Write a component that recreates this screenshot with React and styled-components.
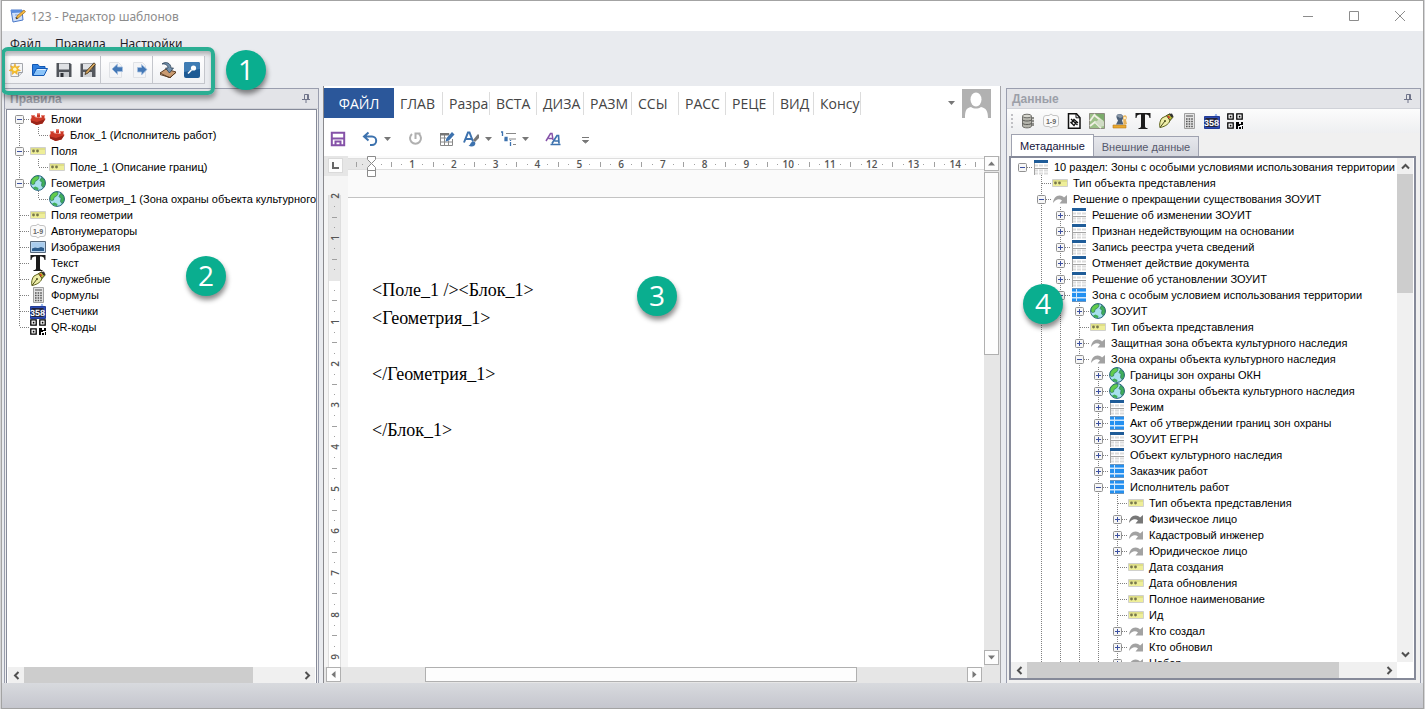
import React from 'react';
import styled, { createGlobalStyle, css } from 'styled-components';

const GlobalStyle = createGlobalStyle`
  * {
    box-sizing: border-box;
  }
  body {
    margin: 0;
    background: #d4d4d6;
    font-family: 'Liberation Sans', Arial, sans-serif;
    font-size: 11px;
    color: #000;
  }
  button {
    margin: 0;
    padding: 0;
    border: 0;
    background: none;
    font: inherit;
    color: inherit;
    cursor: pointer;
  }
  svg {
    display: block;
    flex: none;
  }
`;

const uiFont = "'Open Sans', 'Segoe UI', sans-serif";
const menuFont = "'Noto Sans', 'Segoe UI', sans-serif";

const dots = (direction) =>
  `repeating-linear-gradient(${direction}, #808080 0 1px, transparent 1px 2px)`;

/* ---------- window ---------- */

const Window = styled.div`
  position: relative;
  display: flex;
  flex-direction: column;
  height: 100vh;
  margin: 0 1px;
  border: 1px solid #a3a3a3;
  background: #e9ebef;
  overflow: hidden;
`;

const TitleBar = styled.header`
  display: flex;
  flex: none;
  align-items: center;
  height: 30px;
  padding-left: 8px;
  background: #fff;
  color: #8c8c8c;
  font-family: ${menuFont};
  h1 {
    flex: 1;
    margin: 0 0 0 5px;
    font-size: 12px;
    font-weight: 400;
  }
`;

const WindowButton = styled.button`
  display: flex;
  align-items: center;
  justify-content: center;
  width: 46px;
  height: 30px;
`;

const MenuBar = styled.nav`
  display: flex;
  flex: none;
  align-items: center;
  gap: 14px;
  height: 25px;
  padding-left: 8px;
  font-family: ${menuFont};
  font-size: 12px;
  color: #1e1e28;
`;

const MainToolbar = styled.div`
  display: flex;
  flex: none;
  align-self: flex-start;
  height: 28px;
  margin: 0 0 2px 2px;
  border: solid #c4c6cc;
  border-width: 0 1px 1px 0;
  background: linear-gradient(#fff, #f0f1f4);
`;

const ToolGroup = styled.div`
  display: flex;
  align-items: center;
  gap: 8px;
  padding: 0 4px;
  & + & {
    padding-left: 7px;
    border-left: 1px solid #c4c6cc;
  }
`;

const IconButton = styled.button`
  display: flex;
  align-items: center;
  justify-content: center;
  width: 16px;
  height: 16px;
`;

const Workspace = styled.main`
  display: flex;
  flex: 1;
  min-height: 0;
  padding: 0 2px;
`;

const StatusBar = styled.footer`
  flex: none;
  height: 25px;
  background: linear-gradient(#d8dade, #c5c6ce);
`;

/* ---------- callouts ---------- */

const Highlight = styled.div`
  position: absolute;
  z-index: 3;
  top: 46px;
  left: -1px;
  width: 214px;
  height: 48px;
  border: 4px solid #2bae93;
  border-radius: 7px;
  box-shadow: 1px 4px 5px rgba(0, 0, 0, 0.35), inset 1px 3px 4px rgba(0, 0, 0, 0.25);
  pointer-events: none;
`;

const Callout = styled.div`
  position: absolute;
  z-index: 4;
  top: ${(props) => props.$top}px;
  left: ${(props) => props.$left}px;
  width: 40px;
  height: 40px;
  border-radius: 50%;
  background: #0aae8f;
  box-shadow: 1px 4px 5px rgba(0, 0, 0, 0.45);
  color: #fff;
  font-family: ${uiFont};
  font-size: 28px;
  line-height: 38px;
  text-align: center;
`;

/* ---------- dock panels ---------- */

const Panel = styled.section`
  position: relative;
  display: flex;
  flex: none;
  flex-direction: column;
  width: ${(props) => props.$width}px;
  margin-top: 2px;
  border: 1px solid #9a9eae;
  border-bottom: 0;
  background: #f0f0f0;
`;

const PanelHeader = styled.div`
  display: flex;
  flex: none;
  align-items: center;
  justify-content: space-between;
  height: 20px;
  padding: 0 8px 0 5px;
  background: #e3e4e8;
  border-bottom: 1px solid #d0d2d8;
  color: #9c9fa8;
  h2 {
    margin: 0;
    font-size: 12px;
    font-weight: 700;
  }
`;

const DataToolbar = styled.div`
  display: flex;
  flex: none;
  align-items: center;
  gap: 7px;
  height: 24px;
  padding-left: 4px;
  background: linear-gradient(#fcfcfc, #eeeff1);
`;

const Grip = styled.span`
  width: 2px;
  height: 15px;
  background: repeating-linear-gradient(#c0c0c4 0 2px, transparent 2px 4px);
`;

const Tabs = styled.div`
  display: flex;
  flex: none;
  align-items: flex-end;
  height: 23px;
  padding-left: 4px;
`;

const Tab = styled.button`
  height: ${(props) => (props.$active ? 22 : 20)}px;
  padding: 0 8px;
  border: 1px solid #9fa2b0;
  border-bottom: 0;
  background: ${(props) =>
    props.$active ? '#fff' : 'linear-gradient(#e6e7ec, #d5d7de)'};
  color: ${(props) => (props.$active ? '#14143c' : '#55586c')};
  & + & {
    border-left: 0;
  }
`;

/* ---------- tree ---------- */

const TreeBox = styled.div`
  display: flex;
  flex: 1;
  flex-direction: column;
  min-height: 0;
  margin: ${(props) => props.$margin};
  border: ${(props) => props.$border}px solid #868a99;
  ${(props) =>
    !props.$closed &&
    css`
      border-bottom: 0;
    `}
  background: #fff;
`;

const TreeRow = styled.div`
  display: flex;
  flex: 1;
  min-height: 0;
`;

const TreeList = styled.ul`
  flex: 1;
  min-width: 0;
  margin: 0;
  padding: 1px 0 0 ${(props) => props.$pad}px;
  overflow: hidden;
  list-style: none;
`;

const Node = styled.li`
  display: flex;
  align-items: center;
  height: 16px;
  white-space: nowrap;
  svg {
    position: relative;
    z-index: 1;
  }
`;

const Guide = styled.span`
  flex: none;
  width: 19px;
  height: 16px;
  background: ${(props) => (props.$on ? dots('to bottom') : 'none')} 9px 0 / 1px
    100% no-repeat;
`;

const Branch = styled.span`
  display: flex;
  flex: none;
  align-items: center;
  width: 20px;
  height: 16px;
  padding-left: 5px;
  background: ${dots('to right')} 10px 8px / 10px 1px no-repeat
    ${(props) =>
      props.$up ? `, ${dots('to bottom')} 9px 0 / 1px 8px no-repeat` : ''}
    ${(props) =>
      props.$down ? `, ${dots('to bottom')} 9px 8px / 1px 8px no-repeat` : ''};
`;

const Label = styled.span`
  margin-left: 5px;
  line-height: 16px;
`;

/* ---------- scroll bars ---------- */

const ScrollTrack = styled.div`
  display: flex;
  flex: none;
  flex-direction: ${(props) => (props.$vertical ? 'column' : 'row')};
  ${(props) => (props.$vertical ? 'width: 16px' : 'height: 16px')};
  margin: ${(props) => props.$margin || 0};
  background: #f0f0f0;
`;

const ScrollArrow = styled.button`
  display: flex;
  flex: none;
  align-items: center;
  justify-content: center;
  width: 16px;
  height: 16px;
`;

const Thumb = styled.div`
  flex: ${(props) => props.$size};
  background: #cdcdcd;
`;

const Space = styled.div`
  flex: ${(props) => props.$size};
`;

const DocTrack = styled(ScrollTrack)`
  background: #e6e6e6;
  padding: ${(props) => (props.$vertical ? '0 1px 2px 0' : '0 18px 1px 2px')};
`;

const DocArrow = styled(ScrollArrow)`
  width: 15px;
  height: 15px;
  border: 1px solid #b0b0b0;
  background: #fdfdfd;
`;

const DocThumb = styled(Thumb)`
  border: 1px solid #b0b0b0;
  background: #fdfdfd;
`;

/* ---------- document editor ---------- */

const Editor = styled.section`
  position: relative;
  display: flex;
  flex: 1;
  flex-direction: column;
  min-width: 0;
  margin: 0 5px 0 4px;
  padding-top: 2px;
  border-left: 1px solid #8a8a8e;
  border-right: 1px solid #a6a6aa;
  background: #fff;
`;

const Ribbon = styled.div`
  display: flex;
  flex: none;
  align-items: center;
  height: 30px;
  padding-right: 9px;
  font-family: ${uiFont};
  font-size: 14px;
  color: #444;
`;

const FileTab = styled.button`
  width: 70px;
  height: 30px;
  background: #2b579a;
  color: #fff;
`;

const RibbonTab = styled.button`
  width: ${(props) => props.$width}px;
  height: 23px;
  padding-left: 6px;
  border-right: 1px solid #dcdcdc;
  overflow: hidden;
  line-height: 21px;
  text-align: left;
  white-space: nowrap;
`;

const AccountButton = styled.button`
  display: flex;
  align-items: center;
  gap: 7px;
  margin-left: auto;
`;

const QuickBar = styled.div`
  display: flex;
  flex: none;
  align-items: center;
  gap: 16px;
  height: 38px;
  padding: 4px 0 0 6px;
`;

const QuickGroup = styled.div`
  display: flex;
  gap: 8px;
`;

const QuickButton = styled.button`
  display: flex;
  align-items: center;
  gap: 6px;
`;

const Sheet = styled.div`
  display: grid;
  flex: 1;
  grid-template: 20px 1fr / 24px 1fr 16px;
  min-height: 0;
  background: #f5f5f5;
`;

const RulerCorner = styled.div`
  padding: 2px 0 0 4px;
  background: #e6e6e6;
`;

const TabStop = styled.button`
  display: flex;
  align-items: center;
  justify-content: center;
  width: 15px;
  height: 15px;
  border: 1px solid #dadada;
  background: #fdfdfd;
`;

const RulerRow = styled.div`
  position: relative;
  background: #fafafa;
  svg {
    position: absolute;
    top: 0;
    left: 18px;
  }
`;

const HRuler = styled.div`
  display: flex;
  height: 12px;
  margin-top: 2px;
  border: solid #dedede;
  border-width: 1px 0;
  background: #fff;
  font-family: ${uiFont};
  font-size: 10px;
  font-weight: 600;
  color: #555;
`;

const Units = styled.div`
  display: flex;
  flex: 1;
  flex-direction: ${(props) => (props.$vertical ? 'column' : 'row')};
`;

const HMargin = styled.div`
  display: flex;
  width: 23px;
  padding-right: 6px;
  background: #e6e6e6;
`;

const HMarks = styled.div`
  display: flex;
  flex: 1;
  padding: 0 3px 0 5px;
`;

const Mark = styled.span`
  display: flex;
  flex: 1;
  align-items: center;
  justify-content: center;
  min-width: 0;
  min-height: 0;
  ${(props) =>
    props.$edge &&
    css`
      flex: 0 0 10px;
    `}
`;

const Tick = styled.i`
  width: ${(props) => (props.$wide ? 5 : 1)}px;
  height: ${(props) => (props.$tall ? 5 : 1)}px;
  background: #a0a0a0;
`;

const Turned = styled.span`
  line-height: 10px;
  transform: rotate(-90deg);
`;

const VRuler = styled.div`
  display: flex;
  flex-direction: column;
  margin: 19px 7px 0 4px;
  border: solid #dedede;
  border-width: 0 1px;
  background: #fff;
  font-family: ${uiFont};
  font-size: 10px;
  font-weight: 600;
  color: #555;
`;

const VMargin = styled.div`
  display: flex;
  flex: none;
  flex-direction: column;
  justify-content: flex-end;
  height: 86px;
  padding-bottom: 6px;
  background: #e6e6e6;
`;

const VUnit = styled.div`
  display: flex;
  flex: none;
  flex-direction: column;
  height: 42px;
`;

const VMarks = styled.div`
  display: flex;
  flex: 1;
  flex-direction: column;
  padding: 4px 0 5px;
`;

const PageArea = styled.div`
  display: flex;
  min-width: 0;
  padding-top: 21px;
  background: #fafafa;
`;

const Page = styled.div`
  flex: 1;
  padding: 78px 24px 0;
  border-top: 1px solid #c3c3c3;
  background: #fff;
  font-family: 'Liberation Serif', 'Times New Roman', serif;
  font-size: 18px;
  p {
    height: 28px;
    margin: 0;
    line-height: 28px;
  }
`;

const VScrollCell = styled.div`
  display: flex;
  grid-area: 1 / 3 / 3 / 4;
  background: #fff;
`;

/* ---------- icons ---------- */

const shapes = {
  app: (
    <>
      <path d="M1 2h11l1 10-10 2z" fill="#cfe0fa" stroke="#4a78c8" />
      <path d="M1 2h11l.3 2.500L1.500 5z" fill="#5b8ee0" />
      <path d="M5 7h5M5 9.500h4" stroke="#7fa0d8" />
      <path d="M6 11l1-3 7-6 1.500 1.800-7 6z" fill="#f5b940" stroke="#9c6a1c" strokeWidth=".7" />
      <path d="M6 11l.6-1.800 1.400 1.300z" fill="#222" />
    </>
  ),
  newDoc: (
    <>
      <path d="M3 1.500h11.500v9l-4 4H3z" fill="#f4f5f7" stroke="#a4a7ad" />
      <path d="M14.500 10.500h-4v4" fill="#dcdfe3" stroke="#9a9da3" />
      <path d="M7 1.500l1 3.500 3.500-1-2 3 3 1.500-3.500.8.300 3.200-2.600-2-2.700 2 .5-3.300L1 8.500l3-1.700-1.500-3L5.700 5z" fill="#f5c02c" stroke="#e09a18" strokeWidth=".5" />
      <circle cx="6.800" cy="7.200" r="1.800" fill="#fff6c0" />
    </>
  ),
  open: (
    <>
      <path d="M.5 13.500V2.500h5.500l1.500 2H13V7" fill="#2f80e0" stroke="#1258b4" />
      <path d="M.8 13.500L4.500 6.500H15.500L12 13.500z" fill="#8cc4f8" stroke="#1258b4" />
      <path d="M5.200 7.500h8.500" stroke="#dff0ff" />
    </>
  ),
  save: (
    <>
      <path d="M.5 1h13.500l1.500 1.500V15H.5z" fill="#50545a" />
      <path d="M3 1.500h10v6H3z" fill="#dfe1e4" />
      <path d="M3 10h10v5H3z" fill="#c6c9cd" />
      <path d="M4.500 11h3v4h-3z" fill="#2c2f34" />
    </>
  ),
  saveAs: (
    <>
      <path d="M.5 1.500H14L15.500 3v12H.5z" fill="#55585e" />
      <path d="M3 2h9v5.500H3z" fill="#dfe1e4" />
      <path d="M3 10h9v5H3z" fill="#d0d2d5" />
      <path d="M5 12.500l1-3L14 .8l1.500 1.500L8 11z" fill="#d8a860" stroke="#3a2c18" strokeWidth=".8" />
    </>
  ),
  back: (
    <>
      <path d="M1.500.5h9l3 3v12h-12z" fill="#f4f5f7" stroke="#e0e2e6" />
      <path d="M4 7L9.500 2v3h5v4.500h-5v3z" fill="#4478b6" stroke="#a4bfe0" strokeWidth=".8" />
    </>
  ),
  forward: (
    <>
      <path d="M1.500.5h9l3 3v12h-12z" fill="#f4f5f7" stroke="#e0e2e6" />
      <path d="M15 7.500l-5.500-5v3h-4V10h4v3z" fill="#4478b6" stroke="#a4bfe0" strokeWidth=".8" />
    </>
  ),
  insert: (
    <>
      <path d="M0 11l6-4 10 3-6 6z" fill="#c99a70" stroke="#5c3c22" />
      <path d="M0 11v1.500l10 3 6-5V10" fill="none" stroke="#5c3c22" />
      <path d="M2 2c3.500-3 9-1 9 4h2.500L9.500 11 5.500 6H8C8 3 5 1.500 2 2z" fill="#7290ac" stroke="#24384e" strokeWidth=".7" />
    </>
  ),
  search: (
    <>
      <rect width="16" height="16" rx="2" fill="#1d5a94" />
      <path d="M0 2a2 2 0 012-2h12a2 2 0 012 2v5L0 10z" fill="#3f7cb4" />
      <circle cx="9.500" cy="6" r="2.600" fill="#fff" />
      <path d="M7.500 8L4 11.500" stroke="#fff" strokeWidth="1.600" />
    </>
  ),
  block: (
    <>
      <path d="M.5 8l4-2.500 11 2-3 5-6 1.500L1 11z" fill="#cc3a28" />
      <path d="M1 9.500l6 1.500 8.500-3-3 4.500-6 1.500L1 11.500z" fill="#9a2418" />
      <path d="M1.500 4h3v4h-3zM5.500 6h3v3.500h-3zM7 2.500h3V6H7zM11.500 4h3v4h-3z" fill="#cc3a28" />
      <path d="M1.500 4.500h3M7 3h3M11.500 4.500h3M5.500 6.500h3" stroke="#e88070" />
    </>
  ),
  field: (
    <>
      <path d="M.5 4.500h15v7H.5z" fill="#eeee98" stroke="#d0d0cc" />
      <path d="M1 5h14v2H1z" fill="#dede88" />
      <circle cx="3.500" cy="8" r="1.400" fill="#77774c" />
      <circle cx="7.500" cy="8" r="1.400" fill="#77774c" />
    </>
  ),
  globe: (
    <>
      <circle cx="8" cy="8" r="7.400" fill="#a8e0ee" stroke="#24607c" />
      <path d="M1.500 5C3 2 6 .8 8.500 1L9 3 7.500 5 5 6.500 4.500 9 2.500 9.500 1 8z" fill="#62cc4c" stroke="#2a7a5c" strokeWidth=".7" />
      <path d="M11.500 2.500c3 1.500 4 4 3.500 7l-2 3-1.500-2 .5-3-2-2z" fill="#3fae5a" stroke="#2a7a5c" strokeWidth=".7" />
      <path d="M3 12.500l2.500-1 3 1.500-.5 2c-2 .2-4-.7-5-2.500z" fill="#3fae5a" />
    </>
  ),
  auto: (
    <>
      <path d="M3 2.500h3l2-1.500 2 1.500h3q2.500 0 2.500 2.500v6q0 2.500-2.500 2.500h-3L8 15l-2-1.500H3Q.5 13.500.5 11V5Q.5 2.500 3 2.500z" fill="#fafafa" stroke="#c4c4c4" />
      <text x="8" y="10.500" textAnchor="middle" fontSize="7" fontWeight="700" fill="#666" fontFamily="Liberation Sans, sans-serif">1-9</text>
    </>
  ),
  image: (
    <>
      <path d="M.5 2.500h15v11H.5z" fill="#b9d4ee" stroke="#56687c" />
      <path d="M2 4h12v4H2z" fill="#a8cceE" />
      <path d="M2 9.500l3-1 3 .5 3-1 3 1V12H2z" fill="#2c5c8c" />
    </>
  ),
  text: (
    <path d="M.5 0h15v5h-1c-.3-2.500-1-3.500-4.500-3.500V13c0 1.500.5 2 2.500 2v1h-9v-1C5.500 15 6 14.500 6 13V1.500C2.500 1.500 1.800 2.500 1.500 5h-1z" fill="#1c1c1c" />
  ),
  pen: (
    <>
      <path d="M2 14.500C1 12 2 7 4 5l5-2.500 3 4C12 10 8 13.500 2 14.500z" fill="#eeeea8" stroke="#5f641c" />
      <path d="M2 14.500L7 8" stroke="#4a4c1c" />
      <circle cx="7" cy="8" r="1" fill="#4a4c1c" />
      <path d="M8.500 2.500L12 .8l3.200 3.200L12 7.500z" fill="#b8bc34" stroke="#4a4c1c" />
      <path d="M11 1l3-.5 1.500 3-2 1z" fill="#333" />
      <path d="M10 3l1.500 2" stroke="#d83c2c" strokeWidth="1.500" />
    </>
  ),
  calc: (
    <>
      <path d="M3.500.5h10v15h-10z" fill="#e4e4e4" stroke="#a0a0a0" />
      <path d="M5 3h7" stroke="#888" strokeWidth="1.600" />
      <path d="M5 6h7M5 8.500h7M5 11h7M5 13.500h7" stroke="#555" strokeWidth="1.400" strokeDasharray="1.600 1" />
    </>
  ),
  counter: (
    <>
      <path d="M.5 3.500h15v12H.5z" fill="#2c4cb4" stroke="#243c98" />
      <path d="M1.500 5h12v9h-12z" fill="#24243c" />
      <text x="7.500" y="13" textAnchor="middle" fontSize="9" fontWeight="700" fill="#fff" fontFamily="Liberation Sans Narrow, Liberation Sans, sans-serif" textRendering="geometricPrecision">358</text>
      <path d="M10.500 2.500L12 1l1.500 1.500z" fill="#3f78e0" />
    </>
  ),
  qr: (
    <>
      <path d="M.8.800h5.400v5.400H.8zM9.800.800h5.400v5.400H9.800zM.8 9.800h5.400v5.400H.8z" fill="#fff" stroke="#000" strokeWidth="1.300" />
      <path d="M2.800 2.800h1.600v1.600H2.800zM11.800 2.800h1.600v1.600h-1.600zM2.800 11.800h1.600v1.600H2.800zM9 9h3v2h2V9h2v3h-3v1h-2v3H9zM12 14h2v2h-2zM15 13h1v3h-1z" fill="#000" />
    </>
  ),
  table: (
    <>
      <path d="M1 1h14v3H1z" fill="#1f5c98" />
      <path d="M1 6.500h14M1 11.500h14M1 14.500h14" stroke="#dcdcdc" strokeWidth="2" />
      <path d="M5.500 5v11M10.500 5v11" stroke="#fff" />
      <path d="M1 9.500h14M1.500 4v12" stroke="#a4a4a4" />
    </>
  ),
  list: (
    <>
      <path d="M1 1h14v14H1z" fill="#d4e8fa" />
      <path d="M1 1h4v3.500H1zM6 1h9v3.500H6zM1 6h4v4H1zM6 6h9v4H6zM1 11.500h4V15H1zM6 11.500h9V15H6z" fill="#2490f0" />
      <path d="M1 1.500h14M1 14.500h14" stroke="#6c94bc" />
    </>
  ),
  link: (
    <path d="M1 12C1.500 6 6 2.500 11 5.500L12 6.500 15 4v8.500H7.500L10 9.500C7 7 3.500 8.500 1 12z" fill="#a2a2a2" />
  ),
  linkDark: (
    <path d="M1 12C1.500 6 6 2.500 11 5.500L12 6.500 15 4v8.500H7.500L10 9.500C7 7 3.500 8.500 1 12z" fill="#787878" />
  ),
  database: (
    <>
      <path d="M10 4h4v9h-4z" fill="#8c8c88" />
      <path d="M10 6.500h4M10 9.500h4" stroke="#d4d4d0" />
      <path d="M2.500 3v10c0 2.500 9 2.500 9 0V3" fill="#b4b4ac" stroke="#70706c" />
      <ellipse cx="7" cy="3" rx="4.500" ry="1.800" fill="#d8d8d0" stroke="#70706c" />
      <path d="M2.500 6.500c0 2 9 2 9 0M2.500 10c0 2 9 2 9 0" fill="none" stroke="#5c5c58" />
    </>
  ),
  hashDoc: (
    <>
      <path d="M2.500.8h8l3.500 4v10.500H2.500z" fill="#fff" stroke="#111" strokeWidth="1.500" />
      <path d="M10 .8v4h4" fill="none" stroke="#111" />
      <path d="M5 6l6.500 6M4.500 9l4 4M7.500 6l4.500 4M5 10.500l3-4M8 12.500l3-4.500" stroke="#111" strokeWidth="1.300" />
    </>
  ),
  map: (
    <>
      <path d="M.5.500h15v15H.5z" fill="#9cc088" stroke="#8c8c80" />
      <path d="M5 1h10v7L9 3z" fill="#7cac6c" />
      <path d="M1 8l5-7M5 2l9 7M1 13l5-4 6 6" stroke="#f0f0e4" strokeWidth="1.800" />
      <path d="M6 9l5-3 4 3v4l-4 1z" fill="#d0dcc4" />
    </>
  ),
  stamp: (
    <>
      <path d="M1 12h13v3H1z" fill="#e8a830" stroke="#b87818" strokeWidth=".6" />
      <path d="M4 11.500l2-4C3.500 4 4 1 7.500 1s5 3 2.500 6.500l1.500 4z" fill="#4c6078" />
      <path d="M4.500 3c2-3 5-2 6.500 1L8 5z" fill="#8a98a8" />
      <path d="M11 3c3-2 5 1 3 4l1 4-3.500 1z" fill="#e8b45c" />
      <circle cx="12.800" cy="5" r="1.200" fill="#fff0c8" />
    </>
  ),
  docSave: (
    <path d="M1.800 1.800h12.400v12.400H1.800zM2 7.500h12M5.500 14v-3.500h5V14" fill="none" stroke="#8552a8" strokeWidth="2" />
  ),
  undo: (
    <path d="M6.500 1.500L2 5.500l4.500 4M2.500 5.500H10a4.200 4.200 0 010 8.400H8" fill="none" stroke="#3d72ae" strokeWidth="2" />
  ),
  redo: (
    <path d="M5 3a5.500 5.500 0 107 0M8.500 8V2.500h5" fill="none" stroke="#b0b0b0" strokeWidth="2" />
  ),
  drawTable: (
    <>
      <path d="M1.500 3h9M1.500 3v11.500h12V8M1.500 7H7M1.500 11h12M5.500 3v11.500M9.500 10v4.500" fill="none" stroke="#888" />
      <path d="M1 2h9v2.500H1z" fill="#777" />
      <path d="M6.500 10.500l1-3.500L13 1l2.500 2.500L10 9.500z" fill="#3d72ae" />
    </>
  ),
  textStyle: (
    <>
      <path d="M1 11.500L5 1.500h1.500l3.500 9M2.500 8h6" fill="none" stroke="#3d72ae" strokeWidth="2" />
      <path d="M10 9l5-6 1 1v3l-4 4z" fill="#777" />
      <path d="M5.500 14.500c2 0 2-4 4.500-4s3 2 1.500 4c-1.500 1.500-4.500 1.300-6 0z" fill="#3d72ae" />
    </>
  ),
  multilevel: (
    <>
      <path d="M6 2.500h10M9 8h7M13 13.500h3" stroke="#888" />
      <path d="M1 1h1.500v4M4.500 6.500H7v3H5V8h2M10.500 11v4M10.500 9v1" fill="none" stroke="#3d72ae" strokeWidth="1.300" />
    </>
  ),
  styles: (
    <>
      <path d="M1 10l4.500-7.500H7L8 9M3.500 7.500H8" fill="none" stroke="#8552a8" strokeWidth="1.500" />
      <path d="M7 12.500l5-8h1.500l.5 8M9.500 10H14M5.500 13.500h10" fill="none" stroke="#3d72ae" strokeWidth="1.700" />
    </>
  ),
  customize: <path d="M5 6.500h7M5.500 9.500h6L8.500 12z" fill="#777" stroke="#777" />,
};

const Icon = ({ name, size = 16 }) => (
  <svg width={size} height={size} viewBox="0 0 16 16" fill="none" aria-hidden="true">
    {shapes[name]}
  </svg>
);

const Caret = () => (
  <svg width="7" height="4" viewBox="0 0 7 4" aria-hidden="true">
    <path d="M0 0h7L3.500 4z" fill="#777" />
  </svg>
);

const Pin = () => (
  <svg width="8" height="9" viewBox="0 0 8 9" fill="none" aria-hidden="true">
    <path d="M2.500 .5h4v5h-4zM0 5.500h8M4 6v3M5.500 1v4" stroke="#70748a" />
  </svg>
);

const Expander = ({ open }) => (
  <svg width="9" height="9" viewBox="0 0 9 9" fill="none" aria-hidden="true">
    <rect x=".5" y=".5" width="8" height="8" rx="1" fill="#f6f6f6" stroke="#919191" />
    <path d={open ? 'M2 4.500h5' : 'M2 4.500h5M4.500 2v5'} stroke="#3c50a0" />
  </svg>
);

const angles = { left: 180, right: 0, up: -90, down: 90 };

const Chevron = ({ to }) => (
  <svg width="9" height="9" viewBox="0 0 9 9" fill="none" aria-hidden="true">
    <path
      d="M2.500 1L6 4.500 2.500 8"
      stroke="#505050"
      strokeWidth="2"
      transform={`rotate(${angles[to]} 4.500 4.500)`}
    />
  </svg>
);

const Triangle = ({ to }) => (
  <svg width="9" height="9" viewBox="0 0 9 9" aria-hidden="true">
    <path d="M2.500 1v7L6.500 4.500z" fill="#777" transform={`rotate(${angles[to]} 4.500 4.500)`} />
  </svg>
);

/* ---------- data: [level, icon, label, state] ---------- */

const rules = [
  [0, 'block', 'Блоки', 'open'],
  [1, 'block', 'Блок_1 (Исполнитель работ)'],
  [0, 'field', 'Поля', 'open'],
  [1, 'field', 'Поле_1 (Описание границ)'],
  [0, 'globe', 'Геометрия', 'open'],
  [1, 'globe', 'Геометрия_1 (Зона охраны объекта культурного наследия)'],
  [0, 'field', 'Поля геометрии'],
  [0, 'auto', 'Автонумераторы'],
  [0, 'image', 'Изображения'],
  [0, 'text', 'Текст'],
  [0, 'pen', 'Служебные'],
  [0, 'calc', 'Формулы'],
  [0, 'counter', 'Счетчики'],
  [0, 'qr', 'QR-коды'],
];

const metadata = [
  [0, 'table', '10 раздел: Зоны с особыми условиями использования территории', 'open'],
  [1, 'field', 'Тип объекта представления'],
  [1, 'link', 'Решение о прекращении существования ЗОУИТ', 'open'],
  [2, 'table', 'Решение об изменении ЗОУИТ', 'closed'],
  [2, 'table', 'Признан недействующим на основании', 'closed'],
  [2, 'table', 'Запись реестра учета сведений', 'closed'],
  [2, 'table', 'Отменяет действие документа', 'closed'],
  [2, 'table', 'Решение об установлении ЗОУИТ', 'closed'],
  [2, 'list', 'Зона с особым условием использования территории', 'open'],
  [3, 'globe', 'ЗОУИТ', 'closed'],
  [3, 'field', 'Тип объекта представления'],
  [3, 'link', 'Защитная зона объекта культурного наследия', 'closed'],
  [3, 'link', 'Зона охраны объекта культурного наследия', 'open'],
  [4, 'globe', 'Границы зон охраны ОКН', 'closed'],
  [4, 'globe', 'Зона охраны объекта культурного наследия', 'closed'],
  [4, 'table', 'Режим', 'closed'],
  [4, 'list', 'Акт об утверждении границ зон охраны', 'closed'],
  [4, 'table', 'ЗОУИТ ЕГРН', 'closed'],
  [4, 'table', 'Объект культурного наследия', 'closed'],
  [4, 'list', 'Заказчик работ', 'closed'],
  [4, 'list', 'Исполнитель работ', 'open'],
  [5, 'field', 'Тип объекта представления'],
  [5, 'linkDark', 'Физическое лицо', 'closed'],
  [5, 'link', 'Кадастровый инженер', 'closed'],
  [5, 'link', 'Юридическое лицо', 'closed'],
  [5, 'field', 'Дата создания'],
  [5, 'field', 'Дата обновления'],
  [5, 'field', 'Полное наименование'],
  [5, 'field', 'Ид'],
  [5, 'link', 'Кто создал', 'closed'],
  [5, 'link', 'Кто обновил', 'closed'],
  [5, 'link', 'Набор', 'closed'],
];

const ribbonTabs = [
  ['ГЛАВ', 49],
  ['Разра', 47],
  ['ВСТА', 47],
  ['ДИЗА', 47],
  ['РАЗМ', 48],
  ['ССЫ', 47],
  ['РАСС', 47],
  ['РЕЦЕ', 48],
  ['ВИД', 40],
  ['Консу', 47],
];

const dataTools = ['database', 'auto', 'hashDoc', 'map', 'stamp', 'text', 'pen', 'calc', 'counter', 'qr'];

const range = (n) => Array.from({ length: n }, (_, i) => i + 1);

// a guide runs on at a level while a later sibling exists there
const continues = (nodes, index, level, openFrom) => {
  for (let i = index + 1; i < nodes.length; i += 1) {
    if (nodes[i][0] === level) return true;
    if (nodes[i][0] < level) return false;
  }
  return level >= openFrom;
};

const Tree = ({ nodes, pad, openFrom = Infinity }) => (
  <TreeList $pad={pad}>
    {nodes.map(([level, icon, label, state], index) => (
      <Node key={`${index}-${label}`}>
        {range(level).map((n) => (
          <Guide key={n} $on={continues(nodes, index, n - 1, openFrom)} />
        ))}
        <Branch $up={index > 0} $down={continues(nodes, index, level, openFrom)}>
          {state && <Expander open={state === 'open'} />}
        </Branch>
        <Icon name={icon} />
        <Label>{label}</Label>
      </Node>
    ))}
  </TreeList>
);

const ScrollBar = ({ vertical, margin, thumb, rest }) => (
  <ScrollTrack $vertical={vertical} $margin={margin}>
    <ScrollArrow aria-label="Назад">
      <Chevron to={vertical ? 'up' : 'left'} />
    </ScrollArrow>
    <Thumb $size={thumb} />
    <Space $size={rest} />
    <ScrollArrow aria-label="Вперед">
      <Chevron to={vertical ? 'down' : 'right'} />
    </ScrollArrow>
  </ScrollTrack>
);

const DocScrollBar = ({ vertical, before, thumb, rest }) => (
  <DocTrack $vertical={vertical}>
    <DocArrow aria-label="Назад">
      <Triangle to={vertical ? 'up' : 'left'} />
    </DocArrow>
    <Space $size={before} />
    <DocThumb $size={thumb} />
    <Space $size={rest} />
    <DocArrow aria-label="Вперед">
      <Triangle to={vertical ? 'down' : 'right'} />
    </DocArrow>
  </DocTrack>
);

const RulesPanel = () => (
  <Panel $width={315}>
    <PanelHeader>
      <h2>Правила</h2>
      <Pin />
    </PanelHeader>
    <TreeBox $margin="0 1px" $border={1}>
      <TreeRow>
        <Tree nodes={rules} pad={3} />
      </TreeRow>
      <ScrollBar margin="0 1px" thumb={229} rest={46} />
    </TreeBox>
    <Callout $top={167} $left={181}>2</Callout>
  </Panel>
);

const DocumentEditor = () => (
  <Editor>
    <Ribbon>
      <FileTab>ФАЙЛ</FileTab>
      {ribbonTabs.map(([label, width]) => (
        <RibbonTab key={label} $width={width}>
          {label}
        </RibbonTab>
      ))}
      <AccountButton aria-label="Учетная запись">
        <Caret />
        <svg width="29" height="29" viewBox="0 0 29 29" aria-hidden="true">
          <path d="M0 0h29v29H0z" fill="#b1b1b1" />
          <ellipse cx="14" cy="10.500" rx="5.500" ry="7" fill="#fff" />
          <path d="M3 29c0-7 1-10 6-11 3 2 7 2 10 0 5 1 7 4 7 11z" fill="#fff" />
        </svg>
      </AccountButton>
    </Ribbon>
    <QuickBar>
      <QuickButton aria-label="Сохранить"><Icon name="docSave" /></QuickButton>
      <QuickButton aria-label="Отменить"><Icon name="undo" /><Caret /></QuickButton>
      <QuickButton aria-label="Повторить"><Icon name="redo" /></QuickButton>
      <QuickGroup>
        <QuickButton aria-label="Нарисовать таблицу"><Icon name="drawTable" /></QuickButton>
        <QuickButton aria-label="Стиль текста"><Icon name="textStyle" /><Caret /></QuickButton>
        <QuickButton aria-label="Многоуровневый список"><Icon name="multilevel" /><Caret /></QuickButton>
      </QuickGroup>
      <QuickButton aria-label="Стили"><Icon name="styles" /></QuickButton>
      <QuickButton aria-label="Настройка панели"><Icon name="customize" /></QuickButton>
    </QuickBar>
    <Sheet>
      <RulerCorner>
        <TabStop aria-label="Табуляция">
          <svg width="7" height="7" viewBox="0 0 7 7">
            <path d="M1 0v6h6" fill="none" stroke="#666" strokeWidth="2" />
          </svg>
        </TabStop>
      </RulerCorner>
      <RulerRow>
        <HRuler>
          <HMargin>
            <Mark />
            <Mark><Tick $tall /></Mark>
            <Mark><Tick /></Mark>
          </HMargin>
          <HMarks>
            <Mark $edge><Tick /></Mark>
            {range(14).map((n) => (
              <Units key={n}>
                <Mark><Tick $tall /></Mark>
                <Mark><Tick /></Mark>
                <Mark>{n}</Mark>
                <Mark><Tick /></Mark>
              </Units>
            ))}
            <Mark $edge><Tick $tall /></Mark>
          </HMarks>
        </HRuler>
        <svg width="11" height="22" viewBox="0 0 11 22" aria-hidden="true">
          <path d="M1.500.5h8v3l-4 4-4-4zM5.500 7.500l4 4v3h-8v-3zM1.500 14.500h8v6h-8z" fill="#fff" stroke="#8a8a8a" />
        </svg>
      </RulerRow>
      <VRuler>
        <VMargin>
          {[2, 1].map((n) => (
            <VUnit key={n}>
              <Mark><Turned>{n}</Turned></Mark>
              <Mark><Tick /></Mark>
              <Mark><Tick $wide /></Mark>
              <Mark><Tick /></Mark>
            </VUnit>
          ))}
        </VMargin>
        <VMarks>
          {range(9).map((n) => (
            <Units key={n} $vertical>
              <Mark><Tick /></Mark>
              <Mark><Tick $wide /></Mark>
              <Mark><Tick /></Mark>
              <Mark><Turned>{n}</Turned></Mark>
            </Units>
          ))}
        </VMarks>
      </VRuler>
      <PageArea>
        <Page>
          <p>{'<Поле_1 /><Блок_1>'}</p>
          <p>{'<Геометрия_1>'}</p>
          <p />
          <p>{'</Геометрия_1>'}</p>
          <p />
          <p>{'</Блок_1>'}</p>
        </Page>
      </PageArea>
      <VScrollCell>
        <DocScrollBar vertical before={1} thumb={182} rest={296} />
      </VScrollCell>
    </Sheet>
    <DocScrollBar before={84} thumb={432} rest={110} />
    <Callout $top={190} $left={313}>3</Callout>
  </Editor>
);

const DataPanel = () => (
  <Panel $width={415}>
    <PanelHeader>
      <h2>Данные</h2>
      <Pin />
    </PanelHeader>
    <DataToolbar>
      <Grip />
      {dataTools.map((name) => (
        <IconButton key={name} aria-label={name}>
          <Icon name={name} />
        </IconButton>
      ))}
    </DataToolbar>
    <Tabs>
      <Tab $active>Метаданные</Tab>
      <Tab>Внешние данные</Tab>
    </Tabs>
    <TreeBox $margin="0 4px 3px 2px" $border={2} $closed>
      <TreeRow>
        <Tree nodes={metadata} pad={2} openFrom={1} />
        <ScrollBar vertical margin="0 1px 0 0" thumb={118} rest={352} />
      </TreeRow>
      <ScrollBar margin="0 17px 0 0" thumb={311} rest={42} />
    </TreeBox>
    <Callout $top={195} $left={16}>4</Callout>
  </Panel>
);

const App = () => (
  <>
    <GlobalStyle />
    <Window>
      <TitleBar>
        <Icon name="app" />
        <h1>123 - Редактор шаблонов</h1>
        <WindowButton aria-label="Свернуть">
          <svg width="10" height="10" viewBox="0 0 10 10"><path d="M0 5.500h10" stroke="#8c8c8c" /></svg>
        </WindowButton>
        <WindowButton aria-label="Развернуть">
          <svg width="10" height="10" viewBox="0 0 10 10"><path d="M.5.500h9v9h-9z" fill="none" stroke="#8c8c8c" /></svg>
        </WindowButton>
        <WindowButton aria-label="Закрыть">
          <svg width="10" height="10" viewBox="0 0 10 10"><path d="M0 0l10 10M10 0L0 10" stroke="#8c8c8c" /></svg>
        </WindowButton>
      </TitleBar>
      <MenuBar>
        <button>Файл</button>
        <button>Правила</button>
        <button>Настройки</button>
      </MenuBar>
      <MainToolbar>
        <ToolGroup>
          <IconButton aria-label="Создать"><Icon name="newDoc" /></IconButton>
          <IconButton aria-label="Открыть"><Icon name="open" /></IconButton>
          <IconButton aria-label="Сохранить"><Icon name="save" /></IconButton>
          <IconButton aria-label="Сохранить как"><Icon name="saveAs" /></IconButton>
        </ToolGroup>
        <ToolGroup>
          <IconButton aria-label="Предыдущий"><Icon name="back" /></IconButton>
          <IconButton aria-label="Следующий"><Icon name="forward" /></IconButton>
        </ToolGroup>
        <ToolGroup>
          <IconButton aria-label="Вставить"><Icon name="insert" /></IconButton>
          <IconButton aria-label="Найти"><Icon name="search" /></IconButton>
        </ToolGroup>
      </MainToolbar>
      <Workspace>
        <RulesPanel />
        <DocumentEditor />
        <DataPanel />
      </Workspace>
      <StatusBar />
      <Highlight />
      <Callout $top={49} $left={224}>1</Callout>
    </Window>
  </>
);

export default App;
